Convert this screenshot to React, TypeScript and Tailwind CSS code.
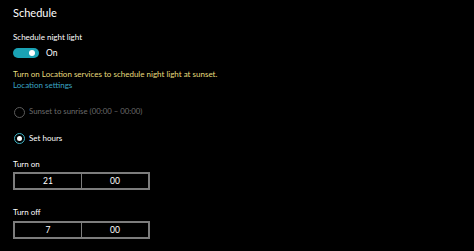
import { useState } from "react";

function TimeBox({ hour, minute }: { hour: string; minute: string }) {
  return (
    <div className="flex h-[18px] w-[137px] border-2 border-[#7d7d7d] text-[8.5px] leading-[12px] text-white">
      <div className="flex w-[67px] items-center justify-center border-r border-[#7d7d7d]">{hour}</div>
      <div className="flex flex-1 items-center justify-center">{minute}</div>
    </div>
  );
}

export default function App() {
  const [on, setOn] = useState(true);
  const [mode, setMode] = useState<"sunset" | "hours">("hours");

  return (
    <div
      className="h-[251px] w-[474px] overflow-hidden bg-black pl-[13px] pt-[4px] text-white"
      style={{ fontFamily: 'Lato, "Open Sans", sans-serif' }}
    >
      <div className="text-[11px] leading-[18px]">Schedule</div>

      <div className="mt-[8px] text-[8px] leading-[14px]">Schedule night light</div>

      <div className="mt-[4px] flex h-[10px] items-center gap-[7px]">
        <button
          onClick={() => setOn(!on)}
          className={`flex h-[10px] w-[26px] items-center rounded-full px-[2px] ${
            on ? "justify-end bg-[#1aa2b4]" : "justify-start border border-white"
          }`}
        >
          <span className="mr-[2px] h-[6px] w-[6px] rounded-full bg-white" />
        </button>
        <span className="text-[8.5px] leading-[12px]">{on ? "On" : "Off"}</span>
      </div>

      <div className="mt-[11px] text-[8px] leading-[11px]">
        <div className="text-[#e8de7e]">Turn on Location services to schedule night light at sunset.</div>
        <div className="text-[#3aa5c4]">Location settings</div>
      </div>

      <div className="mt-[15px] flex h-[12px] items-center gap-[4px] text-[7.8px] text-[#6b6b6b]">
        <span
          onClick={() => setMode("sunset")}
          className="ml-[1px] h-[11px] w-[11px] rounded-full border border-[#5c5c5c]"
        />
        <span>Sunset to sunrise (00:00 – 00:00)</span>
      </div>

      <div className="mt-[14px] flex h-[12px] items-center gap-[4px] text-[8px] text-white">
        <span
          onClick={() => setMode("hours")}
          className="ml-[1px] flex h-[11px] w-[11px] items-center justify-center rounded-full border border-[#3fb3c4]"
        >
          {mode === "hours" && <span className="h-[5px] w-[5px] rounded-full bg-white" />}
        </span>
        <span>Set hours</span>
      </div>

      <div className="mt-[13px] text-[8px] leading-[14px]">Turn on</div>
      <div className="mt-[1px]">
        <TimeBox hour="21" minute="00" />
      </div>

      <div className="mt-[15px] text-[8px] leading-[14px]">Turn off</div>
      <div className="mt-[2px]">
        <TimeBox hour="7" minute="00" />
      </div>
    </div>
  );
}
